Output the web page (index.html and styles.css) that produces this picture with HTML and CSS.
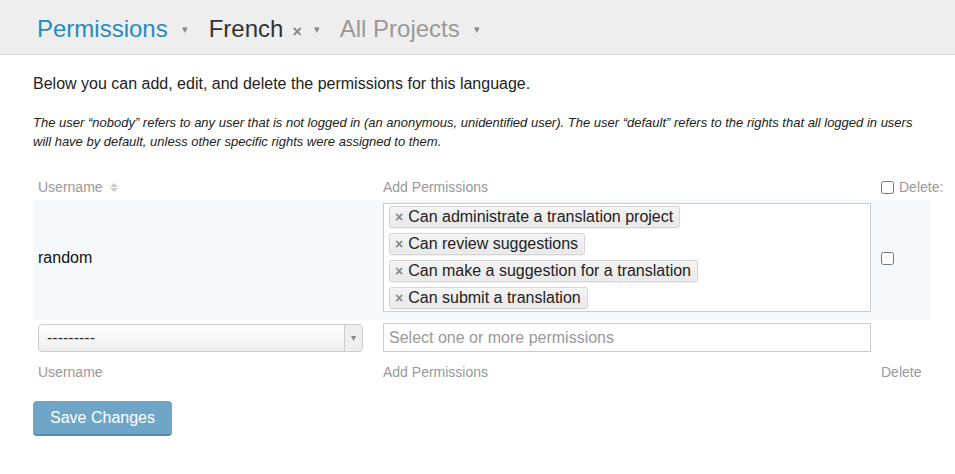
FILE: index.html
```html
<!DOCTYPE html>
<html lang="en">
<head>
<meta charset="utf-8">
<title>Permissions</title>
<link rel="stylesheet" href="styles.css">
</head>
<body>
<header class="topbar">
  <nav class="crumbs">
    <span class="crumb crumb-active">Permissions</span><span class="caret">▾</span>
    <span class="crumb crumb-lang">French</span><span class="clear">×</span><span class="caret">▾</span>
    <span class="crumb crumb-muted">All Projects</span><span class="caret">▾</span>
  </nav>
</header>
<main class="content">
  <p class="lead">Below you can add, edit, and delete the permissions for this language.</p>
  <p class="note">The user “nobody” refers to any user that is not logged in (an anonymous, unidentified user). The user “default” refers to the rights that all logged in users will have by default, unless other specific rights were assigned to them.</p>
  <table class="perm-table">
    <colgroup>
      <col class="col-user">
      <col class="col-perm">
      <col class="col-del">
    </colgroup>
    <thead>
      <tr class="head-row">
        <th>Username <span class="sort"><span class="sort-up"></span><span class="sort-down"></span></span></th>
        <th>Add Permissions</th>
        <th><label class="del-label"><input type="checkbox" class="chk"> Delete:</label></th>
      </tr>
    </thead>
    <tbody>
      <tr class="data-row">
        <td class="user-name">random</td>
        <td>
          <div class="choices">
            <span class="chip"><span class="chip-x">×</span>Can administrate a translation project</span>
            <span class="chip"><span class="chip-x">×</span>Can review suggestions</span>
            <span class="chip"><span class="chip-x">×</span>Can make a suggestion for a translation</span>
            <span class="chip"><span class="chip-x">×</span>Can submit a translation</span>
          </div>
        </td>
        <td><input type="checkbox" class="chk"></td>
      </tr>
      <tr class="new-row">
        <td>
          <div class="fake-select"><span class="fs-value">---------</span><span class="fs-arrow">▾</span></div>
        </td>
        <td>
          <div class="fake-input">Select one or more permissions</div>
        </td>
        <td></td>
      </tr>
    </tbody>
    <tfoot>
      <tr class="foot-row">
        <td>Username</td>
        <td>Add Permissions</td>
        <td>Delete</td>
      </tr>
    </tfoot>
  </table>
  <button class="btn-save" type="button">Save Changes</button>
</main>
</body>
</html>
```
FILE: styles.css
```css
* { box-sizing: border-box; }
html, body { margin: 0; padding: 0; }
body {
  font-family: "Liberation Sans", Arial, sans-serif;
  color: #222;
  background: #fff;
  width: 955px;
}
.topbar {
  height: 55px;
  background: #eeeeee;
  border-bottom: 1px solid #d9d9d9;
  display: flex;
  align-items: center;
  padding-left: 37px;
}
.crumbs { display: flex; align-items: baseline; font-size: 24px; line-height: 28px; padding-top: 7px; }
.crumb-active { color: #1f8dbf; }
.crumb-lang { color: #333; }
.crumb-muted { color: #999; }
.caret { font-size: 11px; color: #888; margin-left: 14px; margin-right: 21px; position: relative; top: -4px; }
.clear { font-size: 16px; color: #888; margin-left: 9px; font-weight: bold; }
.clear + .caret { margin-left: 12px; margin-right: 20px; }

.content { padding: 0 25px 0 33px; }
.lead { margin: 19px 0 0; font-size: 16px; line-height: 20px; color: #222; }
.note { margin: 19px 0 0; font-size: 13px; line-height: 19px; font-style: italic; color: #222; }

.perm-table { width: 897px; table-layout: fixed; border-collapse: collapse; margin-top: 25px; }
.perm-table th, .perm-table td { padding: 0 5px; text-align: left; vertical-align: middle; }
col.col-user { width: 345px; }
col.col-perm { width: 498px; }
col.col-del { width: 54px; }
.head-row th { font-weight: normal; font-size: 14px; color: #999; height: 24px; vertical-align: top; padding-top: 3px; white-space: nowrap; }
.sort { display: inline-flex; flex-direction: column; gap: 1px; margin-left: 4px; vertical-align: middle; position: relative; top: -1px; }
.sort-up { width: 0; height: 0; border-left: 4px solid transparent; border-right: 4px solid transparent; border-bottom: 4px solid #ccc; }
.sort-down { width: 0; height: 0; border-left: 4px solid transparent; border-right: 4px solid transparent; border-top: 4px solid #ccc; }
.del-label { display: inline-flex; align-items: center; gap: 5px; }
.chk { width: 13px; height: 13px; margin: 0; vertical-align: middle; }

.data-row { background: #f5f9fc; }
.data-row td { height: 120px; padding-top: 3px; padding-bottom: 8px; }
.user-name { font-size: 16px; color: #111; }
.choices {
  width: 488px;
  border: 1px solid #cccccc;
  background: #fff;
  padding: 2px 5px;
  display: flex;
  flex-direction: column;
  align-items: flex-start;
  gap: 5px;
}
.chip {
  display: inline-flex;
  align-items: center;
  height: 22px;
  padding: 0 6px 0 5px;
  border: 1px solid #d4d4d4;
  border-radius: 3px;
  background: linear-gradient(#f4f4f4, #e8e8e8);
  font-size: 16px;
  color: #222;
  box-shadow: 0 0 2px #fff inset, 0 1px 0 rgba(0,0,0,0.05);
}
.chip-x { font-size: 14px; font-weight: bold; color: #888; margin-right: 5px; }

.new-row td { padding-top: 3px; padding-bottom: 4px; }
.fake-select {
  width: 325px;
  height: 28px;
  border: 1px solid #cccccc;
  border-radius: 4px;
  background: linear-gradient(#ffffff, #eeeeee);
  display: flex;
  align-items: center;
  font-size: 16px;
  color: #333;
}
.fs-value { flex: 1; padding-left: 8px; }
.fs-arrow {
  width: 18px; height: 100%;
  border-left: 1px solid #ccc;
  background: #eee;
  border-radius: 0 4px 4px 0;
  display: flex; align-items: center; justify-content: center;
  font-size: 10px; color: #888;
}
.fake-input {
  width: 488px;
  height: 29px;
  border: 1px solid #cccccc;
  padding: 0 5px;
  display: flex;
  align-items: center;
  font-size: 16px;
  color: #999;
  background: #fff;
}
.foot-row td { font-size: 14px; color: #999; height: 33px; padding-top: 0; padding-bottom: 2px; vertical-align: middle; }

.btn-save {
  margin-top: 12px;
  width: 139px;
  height: 35px;
  border: 0;
  border-bottom: 2px solid #5889a6;
  border-radius: 4px;
  background: #6fa6c7;
  color: #fff;
  font-family: "Liberation Sans", Arial, sans-serif;
  font-size: 16px;
  padding: 0;
}
```
